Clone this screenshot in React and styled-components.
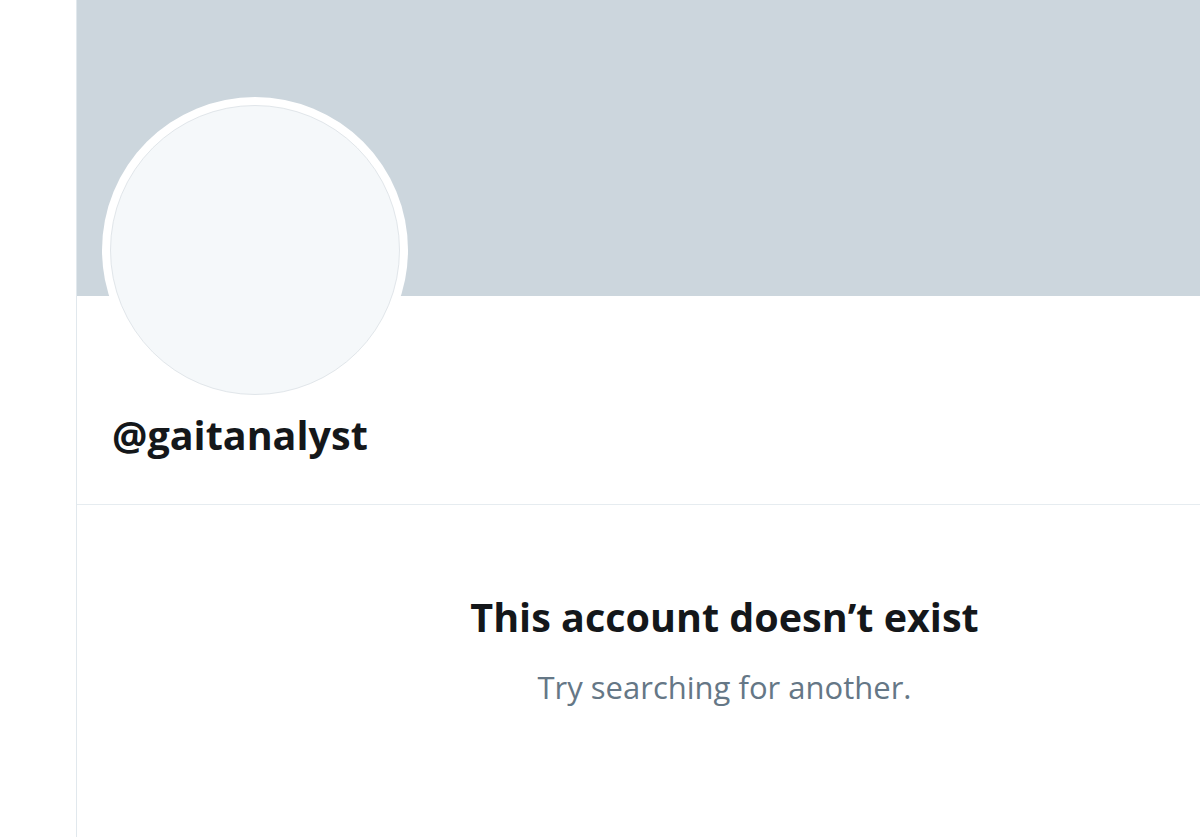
import React from 'react';
import styled, { createGlobalStyle } from 'styled-components';

const Global = createGlobalStyle`
  html, body {
    margin: 0;
    padding: 0;
    background: #ffffff;
    overflow: hidden;
  }
  body {
    font-family: "Open Sans", "Noto Sans", sans-serif;
    color: #14171a;
  }
`;

const Page = styled.div`
  display: flex;
  width: 1200px;
  height: 837px;
  overflow: hidden;
`;

const Gutter = styled.div`
  flex: 0 0 76px;
`;

const Column = styled.main`
  flex: 0 0 1295px;
  min-height: 837px;
  border-left: 1px solid #e1e8ed;
`;

const Banner = styled.div`
  height: 296px;
  background: #ccd6dd;
`;

const Header = styled.section`
  padding: 0 25px 45px;
  border-bottom: 1px solid #e6ecf0;
`;

const Avatar = styled.div`
  width: 306px;
  height: 306px;
  margin-top: -199px;
  box-sizing: border-box;
  border-radius: 50%;
  background: #ffffff;
  padding: 8px;
`;

const AvatarFill = styled.div`
  width: 100%;
  height: 100%;
  box-sizing: border-box;
  border-radius: 50%;
  border: 1px solid #e1e6ea;
  background: #f5f8fa;
`;

const Handle = styled.h2`
  margin: 8px 0 0 10px;
  font-size: 39.5px;
  line-height: 48px;
  font-weight: 700;
  color: #14171a;
`;

const Empty = styled.section`
  display: flex;
  flex-direction: column;
  align-items: center;
  padding-top: 86px;
`;

const Title = styled.h1`
  margin: 0;
  font-size: 39.5px;
  line-height: 52px;
  font-weight: 700;
  color: #14171a;
`;

const Hint = styled.p`
  margin: 24px 0 0;
  font-size: 31px;
  line-height: 40px;
  color: #657786;
`;

export default function App() {
  return (
    <Page>
      <Global />
      <Gutter />
      <Column>
        <Banner />
        <Header>
          <Avatar>
            <AvatarFill />
          </Avatar>
          <Handle>@gaitanalyst</Handle>
        </Header>
        <Empty>
          <Title>This account doesn’t exist</Title>
          <Hint>Try searching for another.</Hint>
        </Empty>
      </Column>
    </Page>
  );
}
